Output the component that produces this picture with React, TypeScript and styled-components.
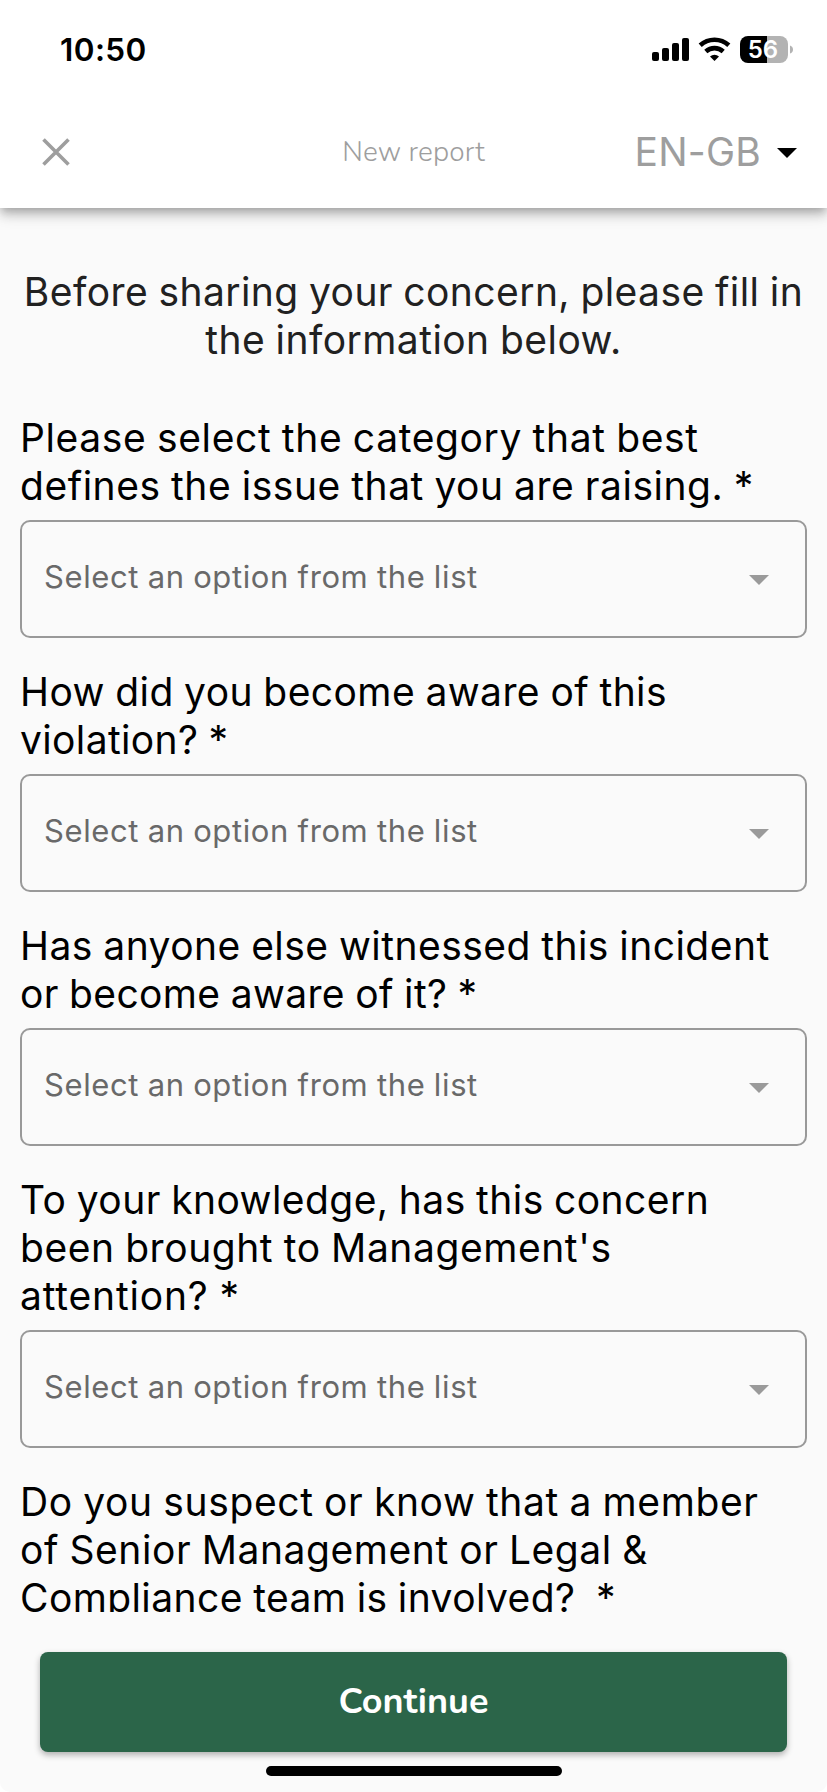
import React from "react";
import styled, { createGlobalStyle } from "styled-components";

const GlobalStyle = createGlobalStyle`
  * { box-sizing: border-box; }
  body { margin: 0; background: #fff; font-family: Inter, "Liberation Sans", sans-serif; }
`;

const Screen = styled.main`
  width: 827px;
  height: 1792px;
  display: flex;
  flex-direction: column;
  overflow: hidden;
  background: #fafafa;
  border-radius: 0 0 10px 10px;
`;

const Header = styled.header`
  flex: none;
  height: 208px;
  background: #fff;
  z-index: 1;
  box-shadow: 0 4px 8px -2px rgba(0, 0, 0, 0.2), 0 8px 10px rgba(0, 0, 0, 0.14),
    0 2px 20px rgba(0, 0, 0, 0.12);
`;

const StatusBar = styled.div`
  height: 96px;
  padding: 4px 34px 0 60px;
  display: flex;
  align-items: center;
  justify-content: space-between;
`;

const Clock = styled.time`
  font-size: 31.5px;
  line-height: 40px;
  font-weight: 600;
  letter-spacing: 0.4px;
  color: #000;
`;

const StatusIcons = styled.svg`
  display: block;
`;

const TitleBar = styled.div`
  height: 112px;
  padding: 0 30px;
  display: grid;
  grid-template-columns: 1fr auto 1fr;
  align-items: center;
`;

const IconButton = styled.button`
  width: 28px;
  height: 28px;
  margin-left: 12px;
  padding: 0;
  border: 0;
  background: none;
  svg { display: block; }
`;

const Title = styled.h1`
  margin: 0;
  font-family: Nunito, Lato, sans-serif;
  font-size: 28px;
  font-weight: 300;
  letter-spacing: 0.15px;
  color: #9e9e9e;
`;

const Language = styled.button`
  justify-self: end;
  display: flex;
  align-items: center;
  gap: 16px;
  padding: 0;
  border: 0;
  background: none;
  font-family: inherit;
  font-size: 39px;
  font-weight: 375;
  line-height: 48px;
  letter-spacing: 0.2px;
  color: #9e9e9e;
  svg { margin-top: 2px; }
`;

const Form = styled.section`
  flex: none;
  height: 1404px;
  overflow: hidden;
  padding: 60px 20px 0;
`;

const Intro = styled.p`
  margin: 0 0 50px;
  text-align: center;
  color: #212121;
`;

const Line = styled.span<{ $tracking: number }>`
  display: block;
  font-size: 39px;
  font-weight: 370;
  line-height: 48px;
  word-spacing: -1px;
  letter-spacing: ${({ $tracking }) => $tracking}px;
  white-space: pre;
`;

const Field = styled.div`
  margin-bottom: 30px;
`;

const Label = styled.label`
  display: block;
  color: #000;
`;

const Select = styled.div`
  margin-top: 10px;
  height: 118px;
  padding: 0 36px 0 22px;
  display: flex;
  align-items: center;
  justify-content: space-between;
  border: 2px solid #999;
  border-radius: 10px;
  svg { margin-top: 2px; }
`;

const Placeholder = styled.span`
  padding-bottom: 4px;
  font-size: 31px;
  font-weight: 380;
  line-height: 40px;
  letter-spacing: 0.62px;
  word-spacing: -0.8px;
  color: #696969;
`;

const Footer = styled.footer`
  flex: 1;
  padding: 40px 40px 0;
  display: flex;
  flex-direction: column;
  align-items: center;
`;

const Continue = styled.button`
  width: 100%;
  height: 100px;
  padding: 0 0 2px;
  border: 0;
  border-radius: 8px;
  background: #2b6549;
  color: #fff;
  font-family: Nunito, Lato, sans-serif;
  font-size: 36px;
  font-weight: 700;
  box-shadow: 0 3px 6px rgba(0, 0, 0, 0.3);
`;

const HomeIndicator = styled.div`
  margin-top: 14px;
  width: 296px;
  height: 10px;
  border-radius: 5px;
  background: #000;
`;

function Caret({ color }: { color: string }) {
  return (
    <svg width="20" height="10" viewBox="0 0 20 10">
      <path d="M0 0H20L10 10Z" fill={color} />
    </svg>
  );
}

type TextLine = [text: string, tracking: number];

const intro: TextLine[] = [
  ["Before sharing your concern, please fill in", 0.42],
  ["the information below.", 0.44],
];

const questions: TextLine[][] = [
  [
    ["Please select the category that best", 0.62],
    ["defines the issue that you are raising. *", 0.53],
  ],
  [
    ["How did you become aware of this", 0.42],
    ["violation? *", 0.36],
  ],
  [
    ["Has anyone else witnessed this incident", 0.46],
    ["or become aware of it? *", 0.35],
  ],
  [
    ["To your knowledge, has this concern", 0.43],
    ["been brought to Management's", 0.56],
    ["attention? *", 0.82],
  ],
  [
    ["Do you suspect or know that a member", 0.61],
    ["of Senior Management or Legal &", 0.56],
    ["Compliance team is involved?  *", 0.4],
  ],
];

function Lines({ lines }: { lines: TextLine[] }) {
  return (
    <>
      {lines.map(([text, tracking]) => (
        <Line key={text} $tracking={tracking}>
          {text}
        </Line>
      ))}
    </>
  );
}

export default function App() {
  return (
    <>
      <GlobalStyle />
      <Screen>
        <Header>
          <StatusBar>
            <Clock>10:50</Clock>
            <StatusIcons width="141" height="28" viewBox="0 0 141 28">
              <rect x="0" y="16" width="7" height="9" rx="2" />
              <rect x="10" y="12" width="7" height="13" rx="2" />
              <rect x="20" y="7" width="7" height="18" rx="2" />
              <rect x="30" y="2" width="7" height="23" rx="2" />
              <g fill="none" stroke="#000" strokeWidth="4.6">
                <path d="M48.2 9.3A21 21 0 0 1 76.8 9.3" />
                <path d="M53.8 15.5A13 13 0 0 1 71.2 15.5" />
              </g>
              <path d="M58 20.4A7 7 0 0 1 67 20.4L62.5 25Z" />
              <path d="M96 0H115V27H96A8 8 0 0 1 88 19V8A8 8 0 0 1 96 0Z" />
              <path d="M115 0H128A8 8 0 0 1 136 8V19A8 8 0 0 1 128 27H115Z" fill="#b3b3b3" />
              <path d="M138 9.5Q141 10.5 141 13.5Q141 16.5 138 17.5Z" fill="#b3b3b3" />
              <text x="111" y="22" textAnchor="middle" fontSize="24" fontWeight="600" fill="#fff">56</text>
            </StatusIcons>
          </StatusBar>
          <TitleBar>
            <IconButton aria-label="Close">
              <svg width="28" height="28" viewBox="0 0 28 28">
                <path d="M1.5 1.5L26.5 26.5M26.5 1.5L1.5 26.5" stroke="#9e9e9e" strokeWidth="3.6" />
              </svg>
            </IconButton>
            <Title>New report</Title>
            <Language>
              EN-GB
              <Caret color="#000" />
            </Language>
          </TitleBar>
        </Header>
        <Form>
          <Intro>
            <Lines lines={intro} />
          </Intro>
          {questions.map((lines, index) => (
            <Field key={index}>
              <Label>
                <Lines lines={lines} />
              </Label>
              {index < questions.length - 1 && (
                <Select>
                  <Placeholder>Select an option from the list</Placeholder>
                  <Caret color="#9a9a9a" />
                </Select>
              )}
            </Field>
          ))}
        </Form>
        <Footer>
          <Continue>Continue</Continue>
          <HomeIndicator />
        </Footer>
      </Screen>
    </>
  );
}
